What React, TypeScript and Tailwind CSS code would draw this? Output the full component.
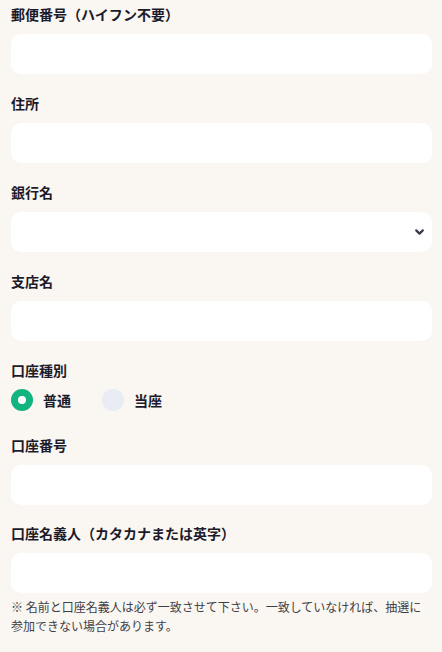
import React from 'react';

const fieldBox = 'block w-full h-10 rounded-[10px] bg-white';

const Label: React.FC<{ children: React.ReactNode }> = ({ children }) => (
  <div className="text-sm leading-5 font-bold text-[#1c1b2b]">{children}</div>
);

const TextField: React.FC<{ label: string }> = ({ label }) => (
  <div>
    <Label>{label}</Label>
    <input type="text" className={`${fieldBox} mt-[10px] px-3 outline-none`} />
  </div>
);

const App: React.FC = () => {
  return (
    <div
      className="min-h-[652px] w-[442px] bg-[#faf6f1] px-[11px] pt-[4px] pr-[10px]"
      style={{ fontFamily: '"Noto Sans CJK JP", "Noto Sans", sans-serif' }}
    >
      <div className="flex flex-col gap-[19px]">
        <TextField label="郵便番号（ハイフン不要）" />
        <TextField label="住所" />

        <div>
          <Label>銀行名</Label>
          <div className={`${fieldBox} mt-[10px] relative`}>
            <svg
              className="absolute right-[7px] top-1/2 -translate-y-1/2"
              width="11"
              height="11"
              viewBox="0 0 10 10"
              fill="none"
            >
              <path d="M2 3.5 L5 6.5 L8 3.5" stroke="#3a3a48" strokeWidth="2" strokeLinecap="round" strokeLinejoin="round" />
            </svg>
          </div>
        </div>

        <TextField label="支店名" />

        <div>
          <Label>口座種別</Label>
          <div className="mt-[8px] flex items-center h-[24px]">
            <label className="flex items-center">
              <span className="flex h-[22px] w-[22px] items-center justify-center rounded-full bg-[#12b47f]">
                <span className="h-2 w-2 rounded-full bg-white" />
              </span>
              <span className="ml-[10px] text-sm font-bold text-[#1c1b2b]">普通</span>
            </label>
            <label className="ml-[31px] flex items-center">
              <span className="h-[22px] w-[22px] rounded-full bg-[#e9ecf5]" />
              <span className="ml-[10px] text-sm font-bold text-[#1c1b2b]">当座</span>
            </label>
          </div>
        </div>

        <div className="mt-[4px]">
          <TextField label="口座番号" />
        </div>

        <div className="-mt-[1px]">
          <TextField label="口座名義人（カタカナまたは英字）" />
          <p className="mt-[4px] text-xs leading-[19px] text-[#3f3f4a]">
            ※ 名前と口座名義人は必ず一致させて下さい。一致していなければ、抽選に参加できない場合があります。
          </p>
        </div>
      </div>
    </div>
  );
};

export default App;
